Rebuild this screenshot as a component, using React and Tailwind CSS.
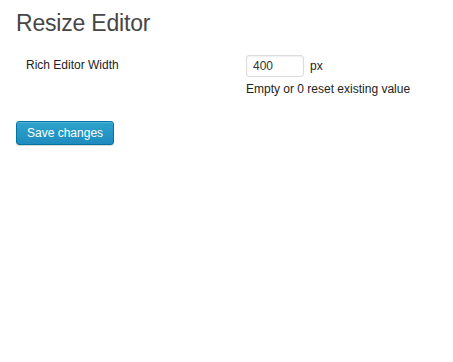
export default function App() {
  return (
    <div className="min-h-screen bg-white text-[12px] text-[#222] font-['Liberation_Sans',Arial,sans-serif]">
      <div className="pl-4 pr-4 pt-[9px]">
        <h2 className="text-[23px] leading-[29px] text-[#464646] font-normal tracking-[-0.2px]">Resize Editor</h2>

        {/* Form row */}
        <div className="flex mt-[17px]">
          <div className="w-[230px] pl-[10px] pt-[1px] leading-[18px]">Rich Editor Width</div>
          <div>
            <div className="flex items-center">
              <input
                type="text"
                defaultValue="400"
                className="w-[58px] h-[22px] px-[6px] border border-[#ddd] rounded-[3px] shadow-[inset_0_1px_2px_rgba(0,0,0,0.07)] text-[12px] text-[#333] outline-none"
              />
              <span className="ml-[6px]">px</span>
            </div>
            <p className="mt-[3px] leading-[18px]">Empty or 0 reset existing value</p>
          </div>
        </div>

        <button className="mt-[23px] h-[24px] px-[10px] rounded-[3px] border border-[#0074a2] bg-gradient-to-b from-[#2ea2cc] to-[#1e8cbe] text-white text-[12px] leading-[22px] shadow-[inset_0_1px_0_rgba(120,200,230,0.5),0_1px_0_rgba(0,0,0,0.15)]">
          Save changes
        </button>
      </div>
    </div>
  )
}
